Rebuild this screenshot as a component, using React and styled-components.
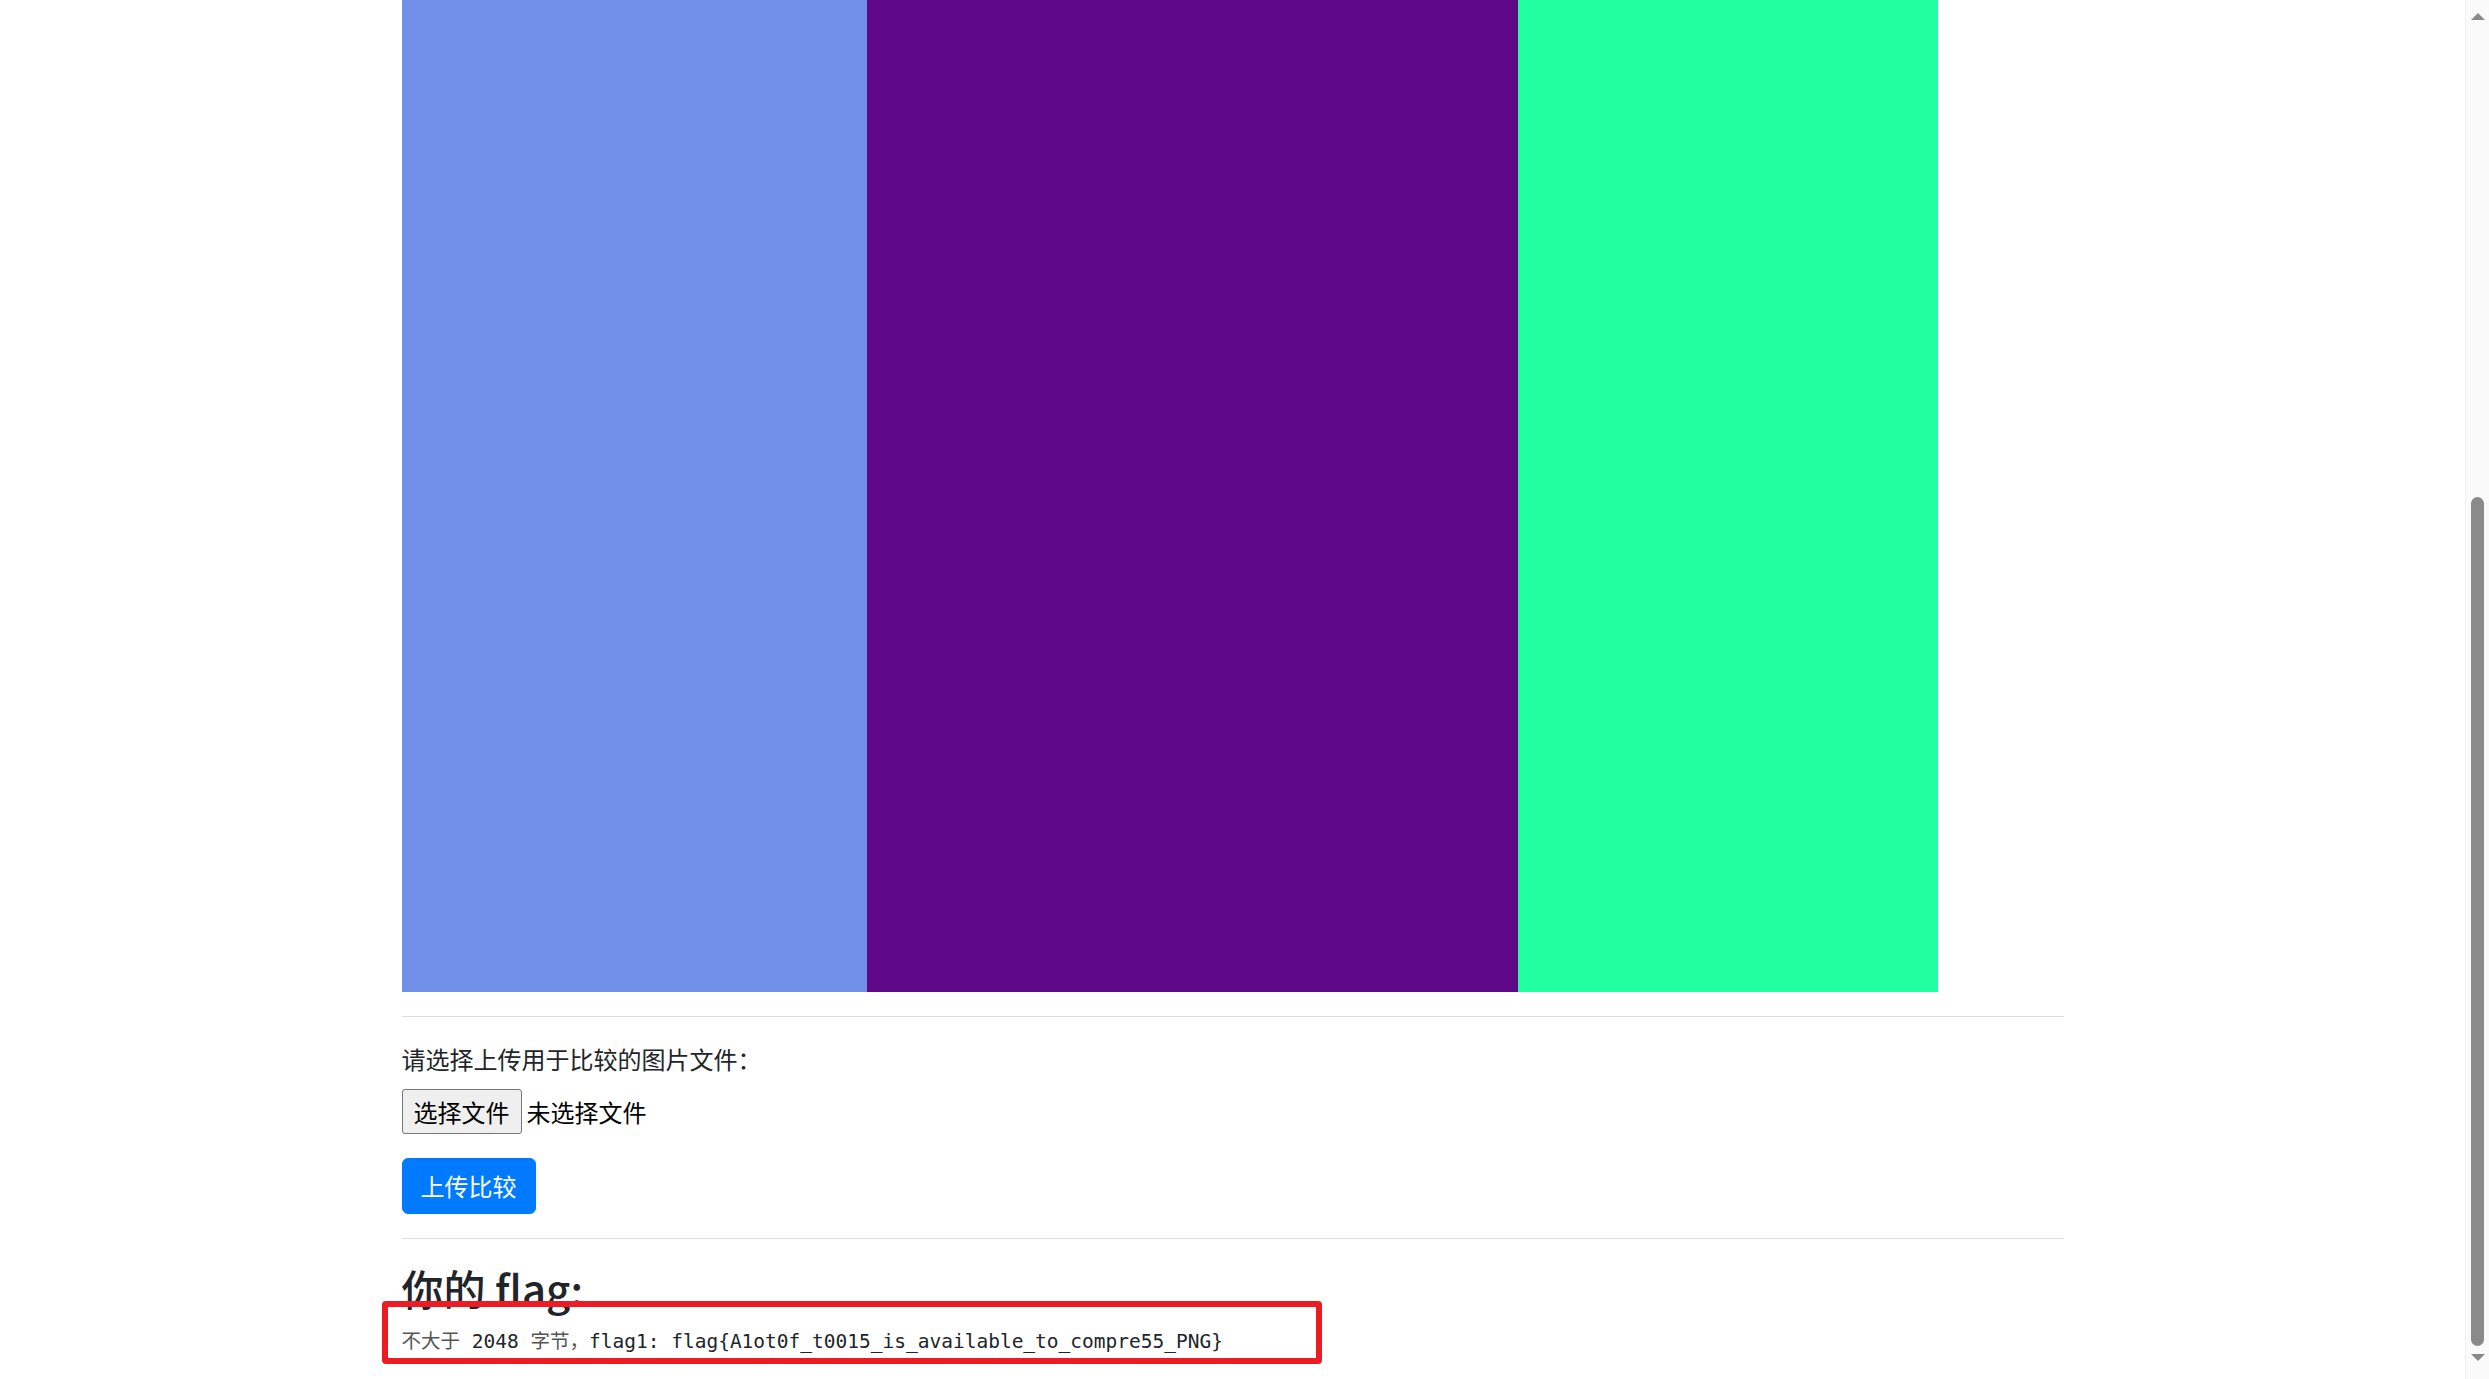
import styled, { createGlobalStyle } from "styled-components";

const GlobalStyle = createGlobalStyle`
  html, body {
    margin: 0;
    padding: 0;
    height: 100%;
    overflow: hidden;
    background: #fff;
  }
  body {
    font-family: "Noto Sans CJK SC", "Noto Sans", sans-serif;
    color: #212529;
  }
`;

const Page = styled.div`
  display: flex;
  height: 100vh;
`;

const Main = styled.main`
  flex: 1;
  overflow: hidden;
`;

const Container = styled.div`
  width: 1662px;
  margin: 0 auto;
`;

const Picture = styled.div`
  display: flex;
  width: 1536px;
  height: 992px;
`;

const Stripe = styled.div`
  width: ${(p) => p.$w}px;
  background: ${(p) => p.$color};
`;

const Rule = styled.hr`
  margin: 24px 0;
  border: 0;
  border-top: 1px solid #dedede;
  height: 0;
`;

const Label = styled.label`
  display: block;
  font-size: 24px;
  line-height: 36px;
  margin: 0 0 12px;
`;

const FileRow = styled.div`
  display: flex;
  align-items: center;
  gap: 5px;
  height: 45px;
`;

const FileButton = styled.button`
  box-sizing: border-box;
  width: 120px;
  height: 45px;
  padding: 0;
  background: #efefef;
  border: 1px solid #767676;
  border-radius: 3px;
  color: #000;
  font-family: inherit;
  font-size: 24px;
`;

const FileName = styled.span`
  font-size: 24px;
  color: #000;
`;

const UploadButton = styled.button`
  display: block;
  margin-top: 24px;
  box-sizing: border-box;
  height: 56px;
  padding: 9px 18px;
  background: #007bff;
  border: 1px solid #007bff;
  border-radius: 6px;
  color: #fff;
  font-family: inherit;
  font-size: 24px;
  line-height: 36px;
`;

const Heading = styled.h3`
  margin: 0 0 12px;
  font-size: 42px;
  font-weight: 500;
  line-height: 1.2;
`;

const FlagLine = styled.div`
  position: relative;
  font-family: "DejaVu Sans Mono", "Noto Sans CJK SC", monospace;
  font-size: 19.5px;
  line-height: 30px;
  white-space: pre;
  color: #212529;
`;

const Cjk = styled.span`
  font-family: "Noto Sans CJK SC", sans-serif;
  color: #555;
`;

const Highlight = styled.div`
  position: absolute;
  left: -20px;
  top: -24px;
  width: 940px;
  height: 63px;
  box-sizing: border-box;
  border: 6px solid #ed1c24;
  border-radius: 4px;
`;

const Scrollbar = styled.div`
  width: 23px;
  display: flex;
  flex-direction: column;
  align-items: center;
  padding-top: 13px;
  background: #fafafa;
  border-left: 1px solid #f0f0f0;
`;

const Arrow = styled.div`
  width: 0;
  height: 0;
  border-left: 7px solid transparent;
  border-right: 7px solid transparent;
  ${(p) =>
    p.$down
      ? "border-top: 7px solid #8a8a8a; margin-top: 8px;"
      : "border-bottom: 7px solid #8a8a8a;"}
`;

const Thumb = styled.div`
  width: 13px;
  height: 849px;
  margin-top: 477px;
  border-radius: 7px;
  background: #8a8a8a;
`;

const stripes = [
  { w: 465, color: "#7090e8" },
  { w: 651, color: "#5e0787" },
  { w: 420, color: "#22ffa0" },
];

export default function App() {
  return (
    <>
      <GlobalStyle />
      <Page>
        <Main>
          <Container>
            <Picture>
              {stripes.map((s) => (
                <Stripe key={s.color} $w={s.w} $color={s.color} />
              ))}
            </Picture>
            <Rule />
            <Label>请选择上传用于比较的图片文件：</Label>
            <FileRow>
              <FileButton>选择文件</FileButton>
              <FileName>未选择文件</FileName>
            </FileRow>
            <UploadButton>上传比较</UploadButton>
            <Rule />
            <Heading>你的 flag:</Heading>
            <FlagLine>
              <Cjk>不大于</Cjk> 2048 <Cjk>字节，</Cjk>flag1: flag{"{"}A1ot0f_t0015_is_available_to_compre55_PNG{"}"}
              <Highlight />
            </FlagLine>
          </Container>
        </Main>
        <Scrollbar>
          <Arrow />
          <Thumb />
          <Arrow $down />
        </Scrollbar>
      </Page>
    </>
  );
}
